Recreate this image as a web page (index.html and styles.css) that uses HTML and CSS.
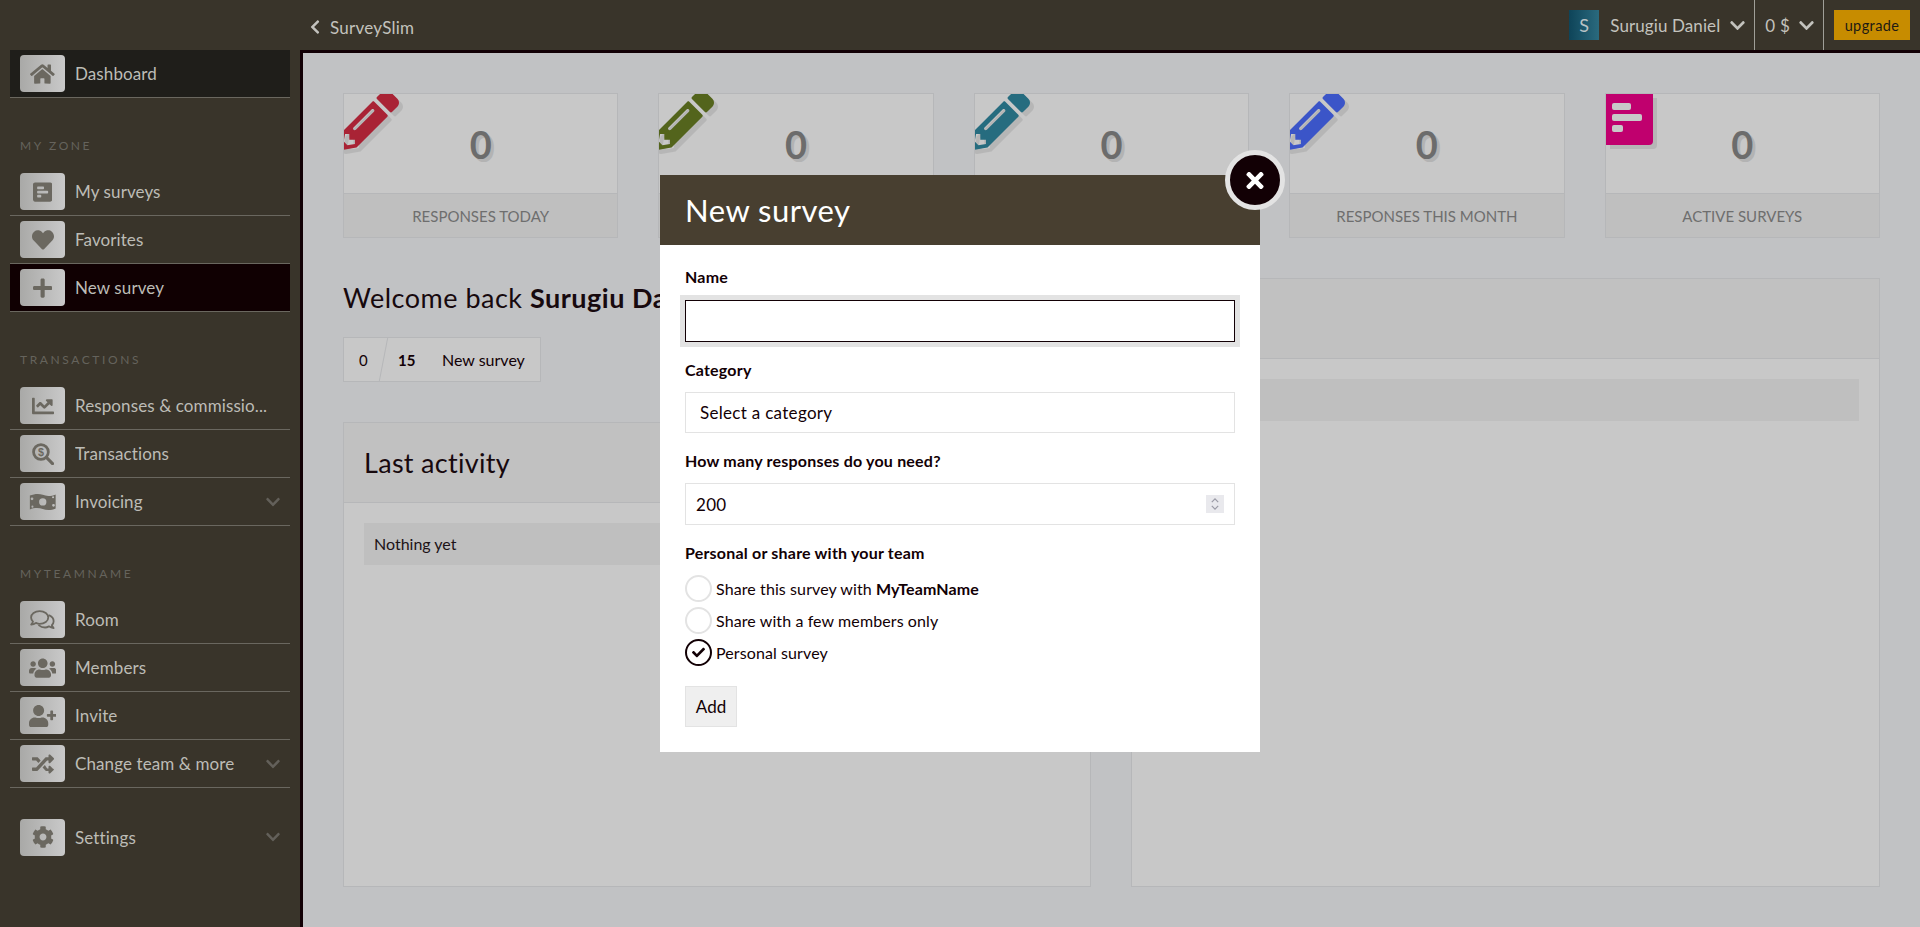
FILE: index.html
```html
<!DOCTYPE html>
<html lang="en">
<head>
<meta charset="utf-8">
<title>SurveySlim</title>
<link rel="stylesheet" href="styles.css">
</head>
<body>
<svg class="defs" aria-hidden="true">
  <defs>
    <path id="home" d="M280.37 148.26L96 300.11V464a16 16 0 0 0 16 16l112.06-.29a16 16 0 0 0 15.92-16V368a16 16 0 0 1 16-16h64a16 16 0 0 1 16 16v95.64a16 16 0 0 0 16 16.05L464 480a16 16 0 0 0 16-16V300L295.67 148.26a12.19 12.19 0 0 0-15.3 0zM571.6 251.47L488 182.56V44.05a12 12 0 0 0-12-12h-56a12 12 0 0 0-12 12v72.61L318.47 43a48 48 0 0 0-61 0L4.34 251.47a12 12 0 0 0-1.6 16.9l25.5 31A12 12 0 0 0 45.15 301l235.22-193.74a12.19 12.19 0 0 1 15.3 0L530.9 301a12 12 0 0 0 16.9-1.6l25.5-31a12 12 0 0 0-1.7-16.93z"/>
    <path id="poll" fill-rule="evenodd" d="M448 432V80c0-26.5-21.5-48-48-48H48C21.5 32 0 53.5 0 80v352c0 26.5 21.5 48 48 48h352c26.5 0 48-21.5 48-48zM112 192c-8.84 0-16-7.16-16-16v-32c0-8.84 7.16-16 16-16h128c8.84 0 16 7.16 16 16v32c0 8.84-7.16 16-16 16H112zm0 96c-8.84 0-16-7.16-16-16v-32c0-8.84 7.16-16 16-16h224c8.84 0 16 7.16 16 16v32c0 8.84-7.16 16-16 16H112zm0 96c-8.84 0-16-7.16-16-16v-32c0-8.84 7.16-16 16-16h64c8.84 0 16 7.16 16 16v32c0 8.84-7.16 16-16 16h-64z"/>
    <path id="heart" d="M462.3 62.6C407.5 15.9 326 24.3 275.7 76.2L256 96.5l-19.7-20.3C186.1 24.3 104.5 15.9 49.7 62.6c-62.8 53.6-66.1 149.8-9.9 207.9l193.5 199.8c12.5 12.9 32.8 12.9 45.3 0l193.5-199.8c56.3-58.1 53-154.3-9.8-207.9z"/>
    <path id="plus" d="M416 208H272V64c0-17.67-14.33-32-32-32h-32c-17.67 0-32 14.33-32 32v144H32c-17.67 0-32 14.33-32 32v32c0 17.67 14.33 32 32 32h144v144c0 17.67 14.33 32 32 32h32c17.67 0 32-14.33 32-32V304h144c17.67 0 32-14.33 32-32v-32c0-17.67-14.33-32-32-32z"/>
    <path id="chart" d="M496 384H64V80c0-8.84-7.16-16-16-16H16C7.16 64 0 71.16 0 80v336c0 17.67 14.33 32 32 32h464c8.84 0 16-7.16 16-16v-32c0-8.84-7.16-16-16-16zM464 96H345.94c-21.38 0-32.09 25.85-16.97 40.97l32.4 32.4L288 242.75l-73.37-73.37c-12.5-12.5-32.76-12.5-45.25 0l-68.69 68.69c-6.25 6.25-6.25 16.38 0 22.63l22.62 22.62c6.25 6.25 16.38 6.25 22.63 0L192 237.25l73.37 73.37c12.5 12.5 32.76 12.5 45.25 0l96-96 32.4 32.4c15.12 15.12 40.97 4.41 40.97-16.97V112c.01-8.84-7.15-16-16.01-16z"/>
    <g id="searchdollar">
      <circle cx="208" cy="208" r="172" fill="none" stroke="currentColor" stroke-width="64"/>
      <path d="M335 335L478 478" fill="none" stroke="currentColor" stroke-width="72" stroke-linecap="round"/>
      <text x="208" y="300" font-size="250" font-weight="700" text-anchor="middle" fill="currentColor" font-family="Liberation Sans, sans-serif">$</text>
    </g>
    <path id="money" fill-rule="evenodd" d="M20 105C140 55 250 60 320 90C400 125 520 125 620 80V405C520 455 400 450 320 420C240 390 120 385 20 430ZM320 170A85 85 0 1 0 320 340A85 85 0 1 0 320 170ZM70 150A32 32 0 1 0 70 214A32 32 0 1 0 70 150ZM570 300A32 32 0 1 0 570 364A32 32 0 1 0 570 300ZM80 340A24 24 0 1 0 80 388A24 24 0 1 0 80 340ZM560 120A24 24 0 1 0 560 168A24 24 0 1 0 560 120Z"/>
    <g id="comments" fill="none" stroke="currentColor" stroke-width="42" stroke-linejoin="round" stroke-linecap="round">
      <path d="M225 50C110 50 25 120 25 200C25 236 42 268 70 293C60 325 42 345 28 362C78 356 115 338 137 324C165 338 195 348 225 348C340 348 425 282 425 200C425 120 340 50 225 50Z"/>
      <path d="M450 150C510 175 550 225 550 285C550 320 535 352 508 376C518 405 535 425 550 442C498 436 462 418 440 404C412 420 382 430 350 430C295 430 245 412 210 382"/>
    </g>
    <path id="users" d="M96 224c35.3 0 64-28.7 64-64s-28.7-64-64-64-64 28.7-64 64 28.7 64 64 64zm448 0c35.3 0 64-28.7 64-64s-28.7-64-64-64-64 28.7-64 64 28.7 64 64 64zm32 32h-64c-17.6 0-33.5 7.1-45.1 18.6 40.3 22.1 68.9 62 75.1 109.4h66c17.7 0 32-14.3 32-32v-32c0-35.3-28.7-64-64-64zm-256 0c61.9 0 112-50.1 112-112S381.9 32 320 32 208 82.1 208 144s50.1 112 112 112zm76.8 32h-8.3c-20.8 10-43.9 16-68.5 16s-47.6-6-68.5-16h-8.3C179.6 288 128 339.6 128 403.2V432c0 26.5 21.5 48 48 48h288c26.5 0 48-21.5 48-48v-28.8c0-63.6-51.6-115.2-115.2-115.2zm-223.7-13.4C161.5 263.1 145.6 256 128 256H64c-35.3 0-64 28.7-64 64v32c0 17.7 14.3 32 32 32h65.9c6.3-47.4 34.9-87.3 75.2-109.4z"/>
    <path id="userplus" d="M624 208h-64v-64c0-8.8-7.2-16-16-16h-32c-8.8 0-16 7.2-16 16v64h-64c-8.8 0-16 7.2-16 16v32c0 8.8 7.2 16 16 16h64v64c0 8.8 7.2 16 16 16h32c8.8 0 16-7.2 16-16v-64h64c8.8 0 16-7.2 16-16v-32c0-8.8-7.2-16-16-16zm-400 48c70.7 0 128-57.3 128-128S294.7 0 224 0 96 57.3 96 128s57.3 128 128 128zm89.6 32h-16.7c-22.2 10.2-46.9 16-72.9 16s-50.6-5.8-72.9-16h-16.7C60.2 288 0 348.2 0 422.4V464c0 26.5 21.5 48 48 48h352c26.5 0 48-21.5 48-48v-41.6c0-74.2-60.2-134.4-134.4-134.4z"/>
    <path id="random" d="M504.971 359.029c9.373 9.373 9.373 24.569 0 33.941l-80 79.984c-15.01 15.01-40.971 4.49-40.971-16.971V416h-58.785a12.004 12.004 0 0 1-8.773-3.812l-70.556-75.596 53.333-57.143L352 360h32v-39.981c0-21.438 25.943-31.998 40.971-16.971l80 79.981zM12 176h84l52.781 56.551 53.333-57.143-70.556-75.596A11.999 11.999 0 0 0 122.785 96H12c-6.627 0-12 5.373-12 12v56c0 6.627 5.373 12 12 12zm372 0v39.984c0 21.46 25.961 31.98 40.971 16.971l80-79.984c9.373-9.373 9.373-24.569 0-33.941l-80-79.981C409.943 24.021 384 34.582 384 56.019V96h-58.785a12.004 12.004 0 0 0-8.773 3.812L96 336H12c-6.627 0-12 5.373-12 12v56c0 6.627 5.373 12 12 12h110.785c3.326 0 6.503-1.381 8.773-3.812L352 176h32z"/>
    <path id="cog" d="M487.4 315.7l-42.6-24.6c4.3-23.2 4.3-47 0-70.2l42.6-24.6c4.9-2.8 7.1-8.6 5.5-14-11.1-35.6-30-67.8-54.7-94.6-3.8-4.1-10-5.1-14.8-2.3L380.8 110c-17.9-15.4-38.5-27.3-60.8-35.1V25.8c0-5.6-3.9-10.5-9.4-11.7-36.7-8.2-74.3-7.8-109.2 0-5.5 1.2-9.4 6.1-9.4 11.7V75c-22.2 7.9-42.8 19.8-60.8 35.1L88.7 85.5c-4.9-2.8-11-1.9-14.8 2.3-24.7 26.7-43.6 58.9-54.7 94.6-1.7 5.4.6 11.2 5.5 14L67.3 221c-4.3 23.2-4.3 47 0 70.2l-42.6 24.6c-4.9 2.8-7.1 8.6-5.5 14 11.1 35.6 30 67.8 54.7 94.6 3.8 4.1 10 5.1 14.8 2.3l42.6-24.6c17.9 15.4 38.5 27.3 60.8 35.1v49.2c0 5.6 3.9 10.5 9.4 11.7 36.7 8.2 74.3 7.8 109.2 0 5.5-1.2 9.4-6.1 9.4-11.7v-49.2c22.2-7.9 42.8-19.8 60.8-35.1l42.6 24.6c4.9 2.8 11 1.9 14.8-2.3 24.7-26.7 43.6-58.9 54.7-94.6 1.5-5.5-.7-11.3-5.6-14.1zM256 336c-44.1 0-80-35.9-80-80s35.9-80 80-80 80 35.9 80 80-35.9 80-80 80z"/>
    <path id="chevdown" d="M207.029 381.476L12.686 187.132c-9.373-9.373-9.373-24.569 0-33.941l22.667-22.667c9.357-9.357 24.522-9.375 33.901-.04L224 284.505l154.745-154.021c9.379-9.335 24.544-9.317 33.901.04l22.667 22.667c9.373 9.373 9.373 24.569 0 33.941L240.971 381.476c-9.373 9.372-24.569 9.372-33.942 0z"/>
    <path id="chevleft" d="M34.52 239.03L228.87 44.69c9.37-9.37 24.57-9.37 33.94 0l22.67 22.67c9.36 9.36 9.37 24.52.04 33.9L131.49 256l154.02 154.75c9.34 9.38 9.32 24.54-.04 33.9l-22.67 22.67c-9.37 9.37-24.57 9.37-33.94 0L34.52 272.97c-9.37-9.37-9.37-24.57 0-33.94z"/>
    <path id="times" d="M242.72 256l100.07-100.07c12.28-12.28 12.28-32.19 0-44.48l-22.24-22.24c-12.28-12.28-32.19-12.28-44.48 0L176 189.28 75.93 89.21c-12.28-12.28-32.19-12.28-44.48 0L9.21 111.45c-12.28 12.28-12.28 32.19 0 44.48L109.28 256 9.21 356.07c-12.28 12.28-12.28 32.19 0 44.48l22.24 22.24c12.28 12.28 32.2 12.28 44.48 0L176 322.72l100.07 100.07c12.28 12.28 32.2 12.28 44.48 0l22.24-22.24c12.28-12.28 12.28-32.19 0-44.48L242.72 256z"/>
    <path id="check" d="M173.898 439.404l-166.4-166.4c-9.997-9.997-9.997-26.206 0-36.204l36.203-36.204c9.997-9.998 26.207-9.998 36.204 0L192 312.69 432.095 72.596c9.997-9.997 26.207-9.997 36.204 0l36.203 36.204c9.997 9.997 9.997 26.206 0 36.204l-294.4 294.401c-9.998 9.997-26.207 9.997-36.204-.001z"/>
    <path id="pencil" fill-rule="evenodd" d="M497.9 142.1l-46.1 46.1c-4.7 4.7-12.3 4.7-17 0l-111-111c-4.7-4.7-4.7-12.3 0-17l46.1-46.1c18.7-18.7 49.1-18.7 67.9 0l60.1 60.1c18.8 18.7 18.8 49.1 0 67.9zM284.2 99.8L21.6 362.4.4 483.9c-2.9 16.4 11.4 30.6 27.8 27.8l121.5-21.3 262.6-262.6c4.7-4.7 4.7-12.3 0-17l-111-111c-4.8-4.7-12.4-4.7-17.1 0zM124.1 339.9c-5.5-5.5-5.5-14.3 0-19.8l154-154c5.5-5.5 14.3-5.5 19.8 0s5.5 14.3 0 19.8l-154 154c-5.5 5.5-14.3 5.5-19.8 0zM88 424h48v36.3l-64.5 11.3-31.1-31.1L51.7 376H88v48z"/>
  </defs>
</svg>

<header class="topbar">
  <a class="brand"><svg class="chev-left" viewBox="0 0 320 512"><use href="#chevleft"/></svg>SurveySlim</a>
  <div class="account">
    <span class="avatar">S</span>
    <span class="user">Surugiu Daniel</span>
    <svg class="chev-top" viewBox="0 0 448 512"><use href="#chevdown"/></svg>
    <span class="balance">0 $</span>
    <svg class="chev-top" viewBox="0 0 448 512"><use href="#chevdown"/></svg>
    <span class="upgrade-wrap"><a class="upgrade">upgrade</a></span>
  </div>
</header>

<div class="shell">
  <nav class="sidebar">
    <a class="row row-dash"><span class="tile"><svg class="ic" viewBox="0 0 576 512"><use href="#home"/></svg></span><span class="row-text">Dashboard</span></a>

    <div class="nav-label">MY ZONE</div>
    <a class="row"><span class="tile"><svg class="ic" viewBox="0 0 448 512"><use href="#poll"/></svg></span><span class="row-text">My surveys</span></a>
    <a class="row"><span class="tile"><svg class="ic" viewBox="0 0 512 512"><use href="#heart"/></svg></span><span class="row-text">Favorites</span></a>
    <a class="row row-active"><span class="tile"><svg class="ic" viewBox="0 0 448 512"><use href="#plus"/></svg></span><span class="row-text">New survey</span></a>

    <div class="nav-label">TRANSACTIONS</div>
    <a class="row"><span class="tile"><svg class="ic" viewBox="0 0 512 512"><use href="#chart"/></svg></span><span class="row-text">Responses &amp; commissio...</span></a>
    <a class="row"><span class="tile"><svg class="ic" viewBox="0 0 512 512"><use href="#searchdollar"/></svg></span><span class="row-text">Transactions</span></a>
    <a class="row"><span class="tile"><svg class="ic" viewBox="0 0 640 512"><use href="#money"/></svg></span><span class="row-text">Invoicing</span><svg class="chev-side" viewBox="0 0 448 512"><use href="#chevdown"/></svg></a>

    <div class="nav-label">MYTEAMNAME</div>
    <a class="row"><span class="tile"><svg class="ic" viewBox="0 0 576 512"><use href="#comments"/></svg></span><span class="row-text">Room</span></a>
    <a class="row"><span class="tile"><svg class="ic" viewBox="0 0 640 512"><use href="#users"/></svg></span><span class="row-text">Members</span></a>
    <a class="row"><span class="tile"><svg class="ic" viewBox="0 0 640 512"><use href="#userplus"/></svg></span><span class="row-text">Invite</span></a>
    <a class="row"><span class="tile"><svg class="ic" viewBox="0 0 512 512"><use href="#random"/></svg></span><span class="row-text">Change team &amp; more</span><svg class="chev-side" viewBox="0 0 448 512"><use href="#chevdown"/></svg></a>

    <a class="row row-settings"><span class="tile"><svg class="ic" viewBox="0 0 512 512"><use href="#cog"/></svg></span><span class="row-text">Settings</span><svg class="chev-side" viewBox="0 0 448 512"><use href="#chevdown"/></svg></a>
  </nav>

  <main class="main">
    <section class="stats">
      <article class="stat">
        <svg class="stat-pencil tone-red" viewBox="0 0 512 512"><use href="#pencil"/></svg>
        <div class="stat-value">0</div>
        <div class="stat-name">RESPONSES TODAY</div>
      </article>
      <article class="stat">
        <svg class="stat-pencil tone-olive" viewBox="0 0 512 512"><use href="#pencil"/></svg>
        <div class="stat-value">0</div>
        <div class="stat-name"></div>
      </article>
      <article class="stat">
        <svg class="stat-pencil tone-teal" viewBox="0 0 512 512"><use href="#pencil"/></svg>
        <div class="stat-value">0</div>
        <div class="stat-name"></div>
      </article>
      <article class="stat">
        <svg class="stat-pencil tone-blue" viewBox="0 0 512 512"><use href="#pencil"/></svg>
        <div class="stat-value">0</div>
        <div class="stat-name">RESPONSES THIS MONTH</div>
      </article>
      <article class="stat">
        <span class="stat-poll"><i class="bar bar-m"></i><i class="bar bar-l"></i><i class="bar bar-s"></i></span>
        <div class="stat-value">0</div>
        <div class="stat-name">ACTIVE SURVEYS</div>
      </article>
    </section>

    <section class="columns">
      <div class="col-left">
        <h1 class="welcome">Welcome back <b>Surugiu Daniel</b></h1>
        <div class="quota">
          <span class="quota-used">0</span>
          <b class="quota-total">15</b>
          <span class="quota-link">New survey</span>
        </div>
        <article class="panel panel-grow">
          <h2 class="panel-head">Last activity</h2>
          <div class="panel-body"><div class="empty">Nothing yet</div></div>
        </article>
      </div>
      <article class="panel">
        <div class="panel-head"></div>
        <div class="panel-body"><div class="empty"></div></div>
      </article>
    </section>
  </main>
</div>

<div class="modal" role="dialog" aria-label="New survey">
  <button class="modal-close" type="button" aria-label="Close"><svg viewBox="0 0 352 512"><use href="#times"/></svg></button>
  <h2 class="modal-head">New survey</h2>
  <form class="modal-form">
    <label class="f-label" for="f-name">Name</label>
    <input class="f-input f-focus" id="f-name" type="text">
    <label class="f-label" for="f-cat">Category</label>
    <div class="f-input f-select" id="f-cat">Select a category</div>
    <label class="f-label" for="f-num">How many responses do you need?</label>
    <div class="f-num-wrap">
      <input class="f-input f-number" id="f-num" type="number" value="200">
      <span class="spin">
        <svg viewBox="0 0 10 6"><path d="M1 5L5 1L9 5"/></svg>
        <svg viewBox="0 0 10 6"><path d="M1 1L5 5L9 1"/></svg>
      </span>
    </div>
    <div class="f-label">Personal or share with your team</div>
    <div class="choices">
      <div class="choice"><span class="radio"></span><span>Share this survey with <b>MyTeamName</b></span></div>
      <div class="choice"><span class="radio"></span><span>Share with a few members only</span></div>
      <div class="choice"><span class="radio radio-on"><svg viewBox="0 0 512 512"><use href="#check"/></svg></span><span>Personal survey</span></div>
    </div>
    <button class="f-submit" type="button">Add</button>
  </form>
</div>
</body>
</html>
```

FILE: styles.css
```css
* { box-sizing: border-box; }
html, body { margin: 0; height: 100%; }
body {
  height: 927px;
  overflow: hidden;
  font-family: "Lato", "Open Sans", sans-serif;
  font-size: 16px;
  color: #120005;
  background: #39342a;
  display: flex;
  flex-direction: column;
}
.defs { position: absolute; width: 0; height: 0; }

/* top bar */
.topbar {
  height: 50px;
  flex: none;
  display: flex;
  align-items: center;
  justify-content: space-between;
  padding-left: 310px;
  background: #39342a;
  color: #c3c2bd;
}
.brand { display: flex; align-items: center; gap: 10px; font-size: 17px; letter-spacing: .25px; padding-top: 4px; }
.chev-left { height: 16px; width: 10px; fill: #c3c2bd; margin-top: -1px; }
.account { display: flex; align-items: center; height: 50px; }
.avatar {
  width: 30px; height: 30px;
  display: flex; align-items: center; justify-content: center;
  background: linear-gradient(90deg, #0e4459, #2a6a7e);
  color: #b9c3c6;
  font-size: 18px;
  margin-right: 11px;
}
.user { font-size: 17px; letter-spacing: .1px; margin-right: 10px; white-space: nowrap; }
.chev-top { width: 15px; height: 17px; fill: #c3c2bd; margin-right: 9px; }
.balance {
  height: 50px; display: flex; align-items: center;
  border-left: 1px solid #a09f98;
  padding-left: 10px; margin-right: 9px;
  font-size: 17px; letter-spacing: .2px;
}
.upgrade-wrap {
  height: 50px; display: flex; align-items: center;
  border-left: 1px solid #a09f98;
  padding: 0 10px;
}
.upgrade {
  width: 76px; height: 30px;
  display: flex; align-items: center; justify-content: center;
  background: #c78c00;
  color: #1d1a14;
  font-size: 14.5px;
  letter-spacing: .4px;
}

/* layout */
.shell { flex: 1; min-height: 0; display: flex; }
.sidebar { width: 300px; flex: none; padding: 0 10px; background: #39342a; }
.row {
  height: 48px;
  display: flex;
  align-items: center;
  padding: 0 10px;
  border-bottom: 1px solid #6a675f;
  color: #bdbcb6;
}
.row-dash { background: #1f1e1a; }
.row-active { background: #100002; }
.row-settings { border-bottom: 0; margin-top: 25px; }
.tile {
  width: 45px; height: 37px;
  flex: none;
  display: flex; align-items: center; justify-content: center;
  border-radius: 4px;
  background: linear-gradient(90deg, #a9a9a7, #c9c9c9);
  color: #6b6860;
  margin-right: 10px;
}
.ic { height: 22px; width: auto; max-width: 30px; fill: currentColor; }
.row-text { flex: 1; font-size: 17px; letter-spacing: .1px; white-space: nowrap; overflow: hidden; }
.chev-side { width: 14px; height: 16px; fill: #63605a; flex: none; margin-right: 0; }
.nav-label {
  margin: 38px 0 12px 10px;
  height: 20px;
  line-height: 20px;
  font-size: 12px;
  letter-spacing: 2.6px;
  color: #65635c;
}

.main {
  flex: 1;
  min-width: 0;
  border-left: 3px solid #120005;
  border-top: 3px solid #120005;
  background: #c1c2c4;
  padding: 40px;
  display: flex;
  flex-direction: column;
}

/* stats */
.stats { display: grid; grid-template-columns: repeat(5, 1fr); gap: 40px; margin-bottom: 40px; flex: none; }
.stat {
  position: relative;
  overflow: hidden;
  height: 145px;
  display: flex;
  flex-direction: column;
  border: 1px solid #b6b7b9;
  background: #c8c8c8;
}
.stat-value {
  flex: 1;
  display: flex; align-items: center; justify-content: center;
  font-size: 38px;
  font-weight: 700;
  color: #6c6c6c;
  text-shadow: 3px 3px 0 #b3b3b3;
}
.stat-name {
  flex: none;
  height: 44px;
  display: flex; align-items: center; justify-content: center;
  border-top: 1px solid #b6b7b9;
  background: #bfbfbf;
  color: #6e6e6e;
  font-size: 15px;
  white-space: nowrap;
}
.stat-pencil {
  position: absolute;
  left: -5px; top: -4px;
  width: 60px; height: 60px;
  filter: drop-shadow(4px 4px 0 #b6b6b6);
}
.tone-red { fill: #a92335; }
.tone-olive { fill: #53641c; }
.tone-teal { fill: #266c7f; }
.tone-blue { fill: #3b55c8; }
.stat-poll {
  position: absolute;
  left: 0; top: 0;
  width: 47px; height: 51px;
  padding: 9px 0 0 6px;
  display: flex; flex-direction: column; gap: 4px;
  background: #c0006e;
  border-bottom-right-radius: 4px;
  box-shadow: 4px 4px 0 #b6b6b6;
}
.bar { display: block; height: 7px; border-radius: 2px; background: #c8c8c8; }
.bar-m { width: 19px; }
.bar-l { width: 30px; }
.bar-s { width: 11px; }

/* columns */
.columns { flex: 1; min-height: 0; display: grid; grid-template-columns: 748fr 749fr; gap: 40px; }
.col-left { display: flex; flex-direction: column; min-height: 0; min-width: 0; }
.welcome { margin: 0; height: 40px; line-height: 40px; font-size: 27px; font-weight: 400; color: #17090e; white-space: nowrap; letter-spacing: .5px; }
.welcome b { font-weight: 700; }
.quota {
  align-self: flex-start;
  position: relative;
  margin: 19px 0 40px;
  width: 198px; height: 45px;
  display: flex; align-items: center;
  border: 1px solid #b6b7b9;
  background: #c8c8c8;
  font-size: 15px;
}
.quota::after {
  content: "";
  position: absolute;
  left: 39px; top: 0;
  width: 1px; height: 43px;
  background: #b6b7b9;
  transform: skewX(-11deg);
}
.quota-used { margin-left: 15px; width: 39px; }
.quota-total { width: 45px; }
.quota-link { font-size: 16px; margin-left: -1px; }
.panel { display: flex; flex-direction: column; border: 1px solid #b6b7b9; background: #c8c8c8; min-height: 0; }
.panel-grow { flex: 1; }
.panel-head {
  flex: none;
  margin: 0;
  height: 80px;
  display: flex; align-items: center;
  padding-left: 20px;
  background: #c1c1c1;
  border-bottom: 1px solid #b6b7b9;
  font-size: 27px;
  font-weight: 400;
  color: #17090e;
  letter-spacing: .3px;
}
.panel-body { padding: 20px; }
.empty {
  height: 42px;
  display: flex; align-items: center;
  padding: 0 0 2px 10px;
  background: #bfbfbf;
  font-size: 16px;
  color: #1d1317;
}

/* modal */
.modal {
  position: fixed;
  left: 660px; top: 175px;
  width: 600px;
  background: #fff;
}
.modal-head {
  margin: 0;
  height: 70px;
  display: flex; align-items: center;
  padding-left: 25px;
  background: #483f30;
  color: #fff;
  font-size: 31px;
  font-weight: 400;
  letter-spacing: .5px;
}
.modal-close {
  position: absolute;
  right: -25px; top: -25px;
  width: 60px; height: 60px;
  padding: 0;
  display: flex; align-items: center; justify-content: center;
  border: 5px solid #e3e3e3;
  border-radius: 50%;
  background: #120005;
}
.modal-close svg { width: 18px; height: 25px; fill: #fff; }
.modal-form { padding: 22px 25px 25px; display: flex; flex-direction: column; align-items: flex-start; }
.f-label { display: block; font-size: 16px; font-weight: 700; line-height: 20px; color: #120005; letter-spacing: .2px; }
.f-input {
  display: flex; align-items: center;
  width: 550px; height: 42px;
  margin: 13px 0 18px;
  padding: 0 10px;
  border: 1px solid #e3e3e3;
  border-radius: 0;
  background: #fff;
  font: inherit;
  font-size: 17px;
  color: #120005;
  outline: none;
  letter-spacing: .3px;
}
.f-focus { border-color: #120005; box-shadow: 0 0 0 5px #e3e3e3; }
.f-select { height: 41px; margin-top: 12px; padding-left: 14px; }
.f-num-wrap { position: relative; width: 550px; height: 42px; margin: 12px 0 18px; }
.f-number { margin: 0; -moz-appearance: textfield; appearance: textfield; }
.f-number::-webkit-inner-spin-button { -webkit-appearance: none; }
.spin {
  position: absolute;
  right: 11px; top: 12px;
  width: 18px; height: 18px;
  display: flex; flex-direction: column; align-items: center; justify-content: center; gap: 2px;
  background: #e9e9ed;
}
.spin svg { width: 8px; height: 5px; fill: none; stroke: #9a9aa5; stroke-width: 1.5; }
.choices { margin-top: 12px; display: flex; flex-direction: column; gap: 6px; }
.choice { display: flex; align-items: center; gap: 4px; height: 26px; font-size: 16px; letter-spacing: .1px; white-space: nowrap; }
.radio {
  width: 27px; height: 27px;
  flex: none;
  display: flex; align-items: center; justify-content: center;
  border: 2px solid #e3e3e3;
  border-radius: 50%;
}
.radio-on { border-color: #120005; }
.radio-on svg { width: 13px; height: 13px; fill: #120005; }
.f-submit {
  margin-top: 21px;
  width: 52px; height: 41px;
  padding: 0;
  border: 1px solid #e3e3e3;
  background: #efefef;
  color: #120005;
  font: inherit;
  font-size: 17px;
}
```
